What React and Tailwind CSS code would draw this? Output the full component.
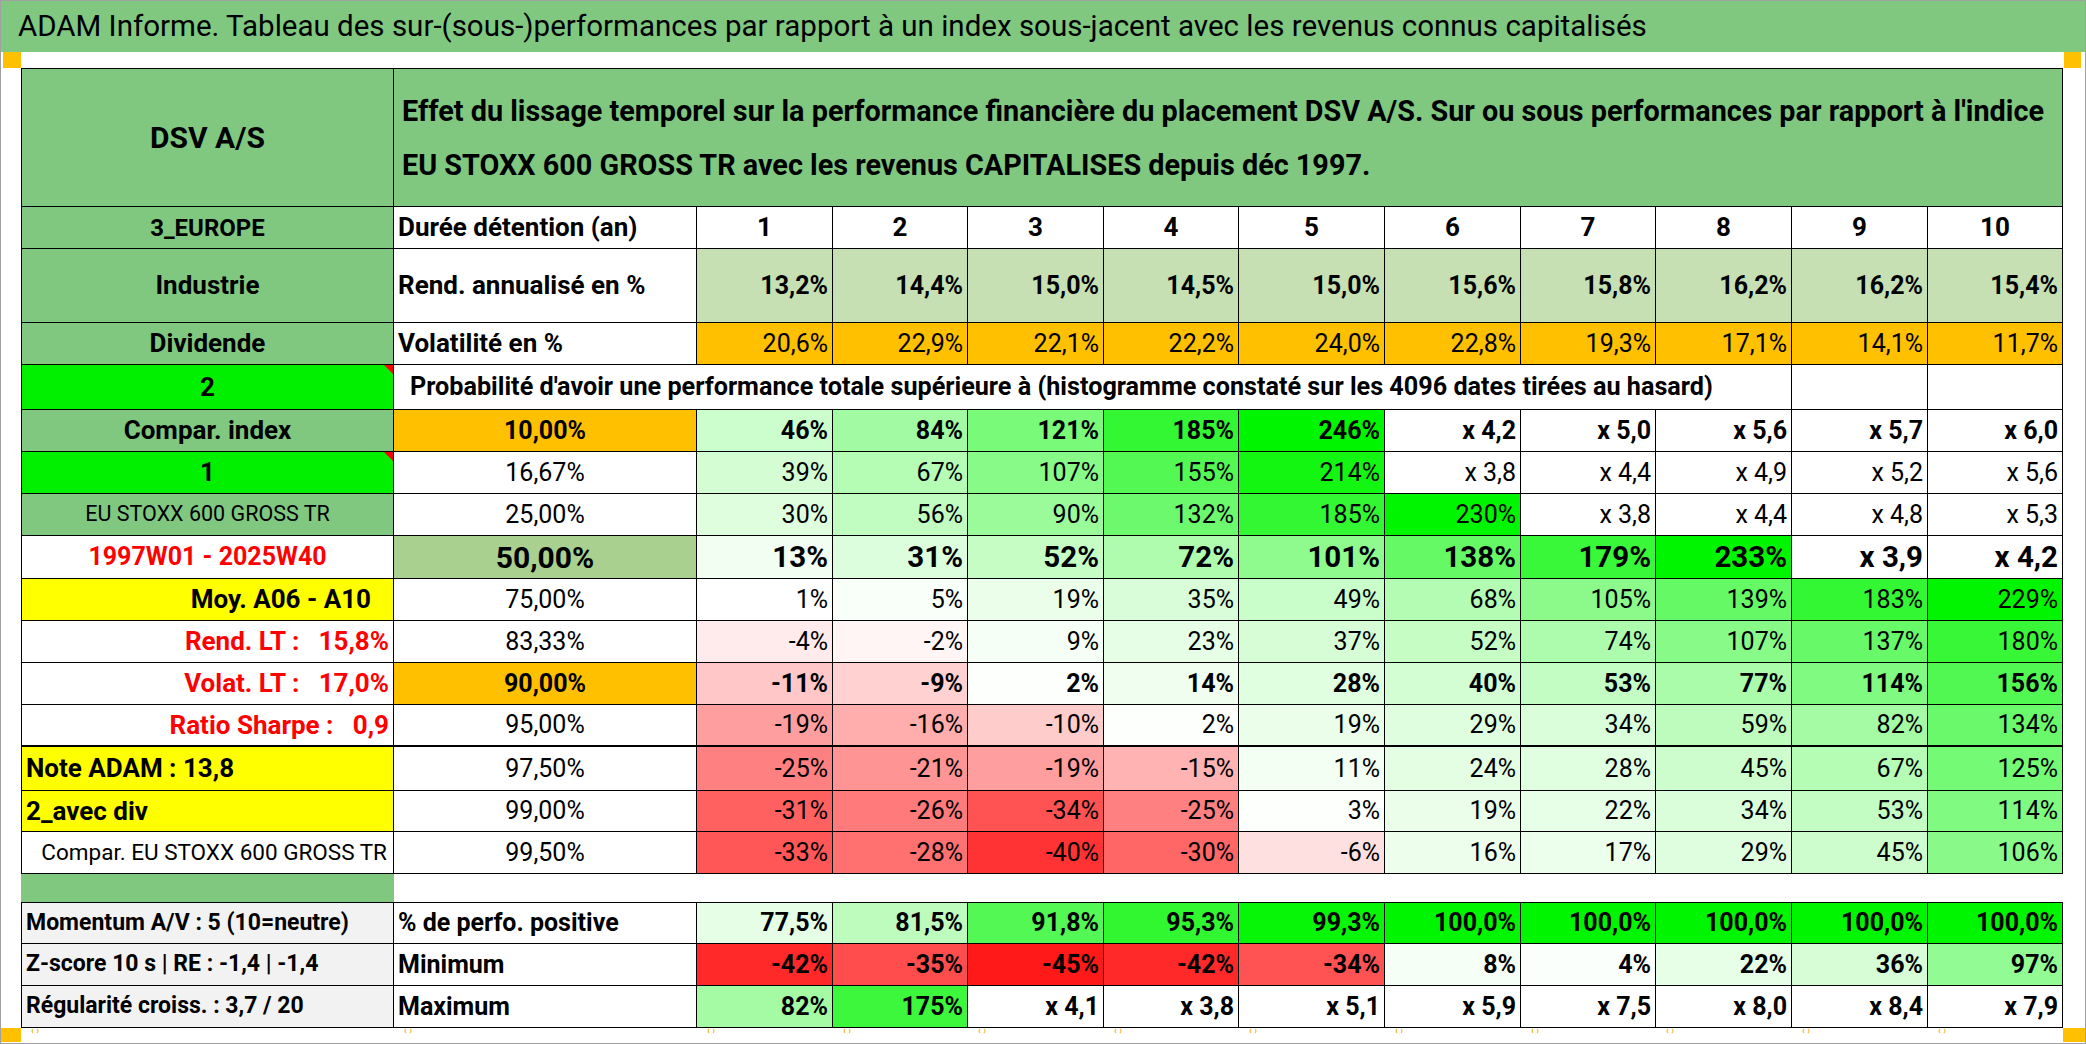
import React from "react";

const GRID =
  "grid grid-cols-[373px_303px_136px_135px_136px_135px_146px_136px_135px_136px_136px_135px]";
const CELL =
  "border-r border-b border-black flex items-center whitespace-nowrap overflow-hidden";
const GREEN = "bg-[#80c880]";

function pct(s) {
  if (!s.endsWith("%")) return null;
  return parseFloat(s.replace(",", ".").replace("%", ""));
}
const clamp = (t) => Math.max(0, Math.min(1, t));
function heat(s, mode) {
  const v = pct(s);
  if (v === null) return "#ffffff";
  let t;
  let red = false;
  if (mode === "pos") t = clamp((v - 75) / 25);
  else if (v >= 0) t = clamp(v / 230);
  else {
    t = clamp(-v / 50);
    red = true;
  }
  const c = Math.round(255 * (1 - t));
  if (red) return `rgb(255,${c},${c})`;
  const g = Math.round(255 - 10 * t);
  return `rgb(${c},${g},${c})`;
}

function Tri() {
  return (
    <div className="absolute top-0 right-0 w-0 h-0 border-t-[9px] border-t-[#ff0000] border-l-[9px] border-l-transparent" />
  );
}

const probRows = [
  {
    label: "Compar. index",
    lcls: `${GREEN} justify-center font-bold text-[26px]`,
    p: "10,00%",
    pcls: "bg-[#ffc000] font-bold text-[25px]",
    vals: ["46%", "84%", "121%", "185%", "246%", "x 4,2", "x 5,0", "x 5,6", "x 5,7", "x 6,0"],
    vcls: "font-bold text-[25px]",
    h: "h-[42px]",
  },
  {
    label: "1",
    lcls: "bg-[#00f000] justify-center font-bold text-[26px] relative",
    tri: true,
    p: "16,67%",
    pcls: "bg-white text-[25px]",
    vals: ["39%", "67%", "107%", "155%", "214%", "x 3,8", "x 4,4", "x 4,9", "x 5,2", "x 5,6"],
    vcls: "text-[25px]",
    h: "h-[42px]",
  },
  {
    label: "EU STOXX 600 GROSS TR",
    lcls: `${GREEN} justify-center text-[21.5px]`,
    p: "25,00%",
    pcls: "bg-white text-[25px]",
    vals: ["30%", "56%", "90%", "132%", "185%", "230%", "x 3,8", "x 4,4", "x 4,8", "x 5,3"],
    vcls: "text-[25px]",
    h: "h-[42px]",
  },
  {
    label: "1997W01 - 2025W40",
    lcls: "bg-white justify-center font-bold text-[25px] text-[#ff0000]",
    p: "50,00%",
    pcls: "bg-[#a9d08e] font-bold text-[30px]",
    vals: ["13%", "31%", "52%", "72%", "101%", "138%", "179%", "233%", "x 3,9", "x 4,2"],
    vcls: "font-bold text-[29.5px]",
    h: "h-[43px]",
  },
  {
    label: "Moy. A06 - A10",
    lcls: "bg-[#ffff00] justify-end pr-[22px] font-bold text-[26px]",
    p: "75,00%",
    pcls: "bg-white text-[25px]",
    vals: ["1%", "5%", "19%", "35%", "49%", "68%", "105%", "139%", "183%", "229%"],
    vcls: "text-[25px]",
    h: "h-[42px]",
  },
  {
    label: "Rend. LT :   15,8%",
    lcls: "bg-white justify-end pr-[4px] font-bold text-[26px] text-[#ff0000] whitespace-pre",
    p: "83,33%",
    pcls: "bg-white text-[25px]",
    vals: ["-4%", "-2%", "9%", "23%", "37%", "52%", "74%", "107%", "137%", "180%"],
    vcls: "text-[25px]",
    h: "h-[42px]",
  },
  {
    label: "Volat. LT :   17,0%",
    lcls: "bg-white justify-end pr-[4px] font-bold text-[26px] text-[#ff0000] whitespace-pre",
    p: "90,00%",
    pcls: "bg-[#ffc000] font-bold text-[25px]",
    vals: ["-11%", "-9%", "2%", "14%", "28%", "40%", "53%", "77%", "114%", "156%"],
    vcls: "font-bold text-[25px]",
    h: "h-[42px]",
  },
  {
    label: "Ratio Sharpe :   0,9",
    lcls: "bg-white justify-end pr-[4px] font-bold text-[26px] text-[#ff0000] whitespace-pre",
    p: "95,00%",
    pcls: "bg-white text-[25px]",
    vals: ["-19%", "-16%", "-10%", "2%", "19%", "29%", "34%", "59%", "82%", "134%"],
    vcls: "text-[25px]",
    h: "h-[42px]",
    thick: true,
  },
  {
    label: "Note ADAM : 13,8",
    lcls: "bg-[#ffff00] justify-start pl-[4px] font-bold text-[26px]",
    p: "97,50%",
    pcls: "bg-white text-[25px]",
    vals: ["-25%", "-21%", "-19%", "-15%", "11%", "24%", "28%", "45%", "67%", "125%"],
    vcls: "text-[25px]",
    h: "h-[44px]",
  },
  {
    label: "2_avec div",
    lcls: "bg-[#ffff00] justify-start pl-[4px] font-bold text-[26px]",
    p: "99,00%",
    pcls: "bg-white text-[25px]",
    vals: ["-31%", "-26%", "-34%", "-25%", "3%", "19%", "22%", "34%", "53%", "114%"],
    vcls: "text-[25px]",
    h: "h-[41px]",
  },
  {
    label: "Compar. EU STOXX 600 GROSS TR",
    lcls: "bg-white justify-end pr-[6px] text-[22.5px]",
    p: "99,50%",
    pcls: "bg-white text-[25px]",
    vals: ["-33%", "-28%", "-40%", "-30%", "-6%", "16%", "17%", "29%", "45%", "106%"],
    vcls: "text-[25px]",
    h: "h-[42px]",
  },
];

const bottomRows = [
  {
    label: "Momentum A/V : 5 (10=neutre)",
    desc: "% de perfo. positive",
    vals: ["77,5%", "81,5%", "91,8%", "95,3%", "99,3%", "100,0%", "100,0%", "100,0%", "100,0%", "100,0%"],
    mode: "pos",
  },
  {
    label: "Z-score 10 s | RE : -1,4 | -1,4",
    desc: "Minimum",
    vals: ["-42%", "-35%", "-45%", "-42%", "-34%", "8%", "4%", "22%", "36%", "97%"],
    mode: "std",
  },
  {
    label: "Régularité croiss. : 3,7 / 20",
    desc: "Maximum",
    vals: ["82%", "175%", "x 4,1", "x 3,8", "x 5,1", "x 5,9", "x 7,5", "x 8,0", "x 8,4", "x 7,9"],
    mode: "std",
  },
];

const rend = ["13,2%", "14,4%", "15,0%", "14,5%", "15,0%", "15,6%", "15,8%", "16,2%", "16,2%", "15,4%"];
const vol = ["20,6%", "22,9%", "22,1%", "22,2%", "24,0%", "22,8%", "19,3%", "17,1%", "14,1%", "11,7%"];

function Mark() {
  return (
    <svg width="10" height="6" viewBox="0 0 10 6" className="ml-[9px]">
      <path d="M3 1 Q1 3 3 5 M7 1 Q9 3 7 5" stroke="#f2c24a" strokeWidth="1.2" fill="none" />
    </svg>
  );
}

export default function App() {
  return (
    <div className="w-[2086px] h-[1044px] bg-white border border-[#a0a0a0] flex flex-col overflow-hidden font-['Roboto',sans-serif] text-black">
      {/* title */}
      <div className="h-[51px] bg-[#80c880] flex items-center pl-[17px] text-[29.5px] whitespace-nowrap">
        ADAM Informe. Tableau des sur-(sous-)performances par rapport à un index sous-jacent avec les revenus connus capitalisés
      </div>
      {/* strip */}
      <div className="h-[16px] flex justify-between">
        <div className="ml-[2px] w-[18px] bg-[#ffc000]" />
        <div className="mr-[4px] w-[17px] bg-[#ffc000]" />
      </div>

      {/* table */}
      <div className="ml-[20px] w-[2042px] flex flex-col">
        {/* header */}
        <div className={`${GRID} h-[139px] border-t border-black`}>
          <div className={`${CELL} border-l ${GREEN} justify-center font-bold text-[30px]`}>DSV A/S</div>
          <div className={`col-span-11 border-r border-b border-black ${GREEN} flex flex-col justify-center pl-[8px] font-bold text-[28.8px] leading-[54px] whitespace-nowrap`}>
            <div>
              Effet du lissage temporel sur la performance financière du placement DSV A/S. Sur ou sous performances par rapport à l'indice
            </div>
            <div>EU STOXX 600 GROSS TR avec les revenus CAPITALISES depuis déc 1997.</div>
          </div>
        </div>

        {/* Durée */}
        <div className={`${GRID} h-[42px]`}>
          <div className={`${CELL} border-l ${GREEN} justify-center font-bold text-[24px]`}>3_EUROPE</div>
          <div className={`${CELL} bg-white pl-[4px] font-bold text-[26px]`}>Durée détention (an)</div>
          {["1", "2", "3", "4", "5", "6", "7", "8", "9", "10"].map((n) => (
            <div key={n} className={`${CELL} bg-white justify-center font-bold text-[26px]`}>
              {n}
            </div>
          ))}
        </div>

        {/* Rendement */}
        <div className={`${GRID} h-[74px]`}>
          <div className={`${CELL} border-l ${GREEN} justify-center font-bold text-[26px]`}>Industrie</div>
          <div className={`${CELL} bg-white pl-[4px] font-bold text-[26px]`}>Rend. annualisé en %</div>
          {rend.map((v, i) => (
            <div key={i} className={`${CELL} bg-[#c6e0b4] justify-end pr-[4px] font-bold text-[25px]`}>
              {v}
            </div>
          ))}
        </div>

        {/* Volatilite */}
        <div className={`${GRID} h-[42px]`}>
          <div className={`${CELL} border-l ${GREEN} justify-center font-bold text-[26px]`}>Dividende</div>
          <div className={`${CELL} bg-white pl-[4px] font-bold text-[26px]`}>Volatilité en %</div>
          {vol.map((v, i) => (
            <div key={i} className={`${CELL} bg-[#ffc000] justify-end pr-[4px] text-[25px]`}>
              {v}
            </div>
          ))}
        </div>

        {/* Probabilite */}
        <div className={`${GRID} h-[45px]`}>
          <div className={`${CELL} border-l bg-[#00f000] justify-center font-bold text-[26px] relative`}>
            2
            <Tri />
          </div>
          <div className={`${CELL} col-span-9 bg-white pl-[16px] font-bold text-[25.2px]`}>
            Probabilité d'avoir une performance totale supérieure à (histogramme constaté sur les 4096 dates tirées au hasard)
          </div>
          <div className={`${CELL} bg-white`} />
          <div className={`${CELL} bg-white`} />
        </div>

        {probRows.map((r, ri) => (
          <div key={ri} className={`${GRID} ${r.h}`}>
            <div className={`${CELL} border-l ${r.thick ? "border-b-2" : ""} ${r.lcls}`}>
              {r.label}
              {r.tri && <Tri />}
            </div>
            <div className={`${CELL} ${r.thick ? "border-b-2" : ""} justify-center ${r.pcls}`}>{r.p}</div>
            {r.vals.map((v, i) => (
              <div
                key={i}
                className={`${CELL} ${r.thick ? "border-b-2" : ""} justify-end pr-[4px] ${r.vcls}`}
                style={{ background: heat(v, "std") }}
              >
                {v}
              </div>
            ))}
          </div>
        ))}

        {/* spacer */}
        <div className={`${GRID} h-[28px]`}>
          <div className={GREEN} />
          <div className="col-span-11 bg-white" />
        </div>

        {bottomRows.map((r, ri) => (
          <div key={ri} className={`${GRID} h-[42px] ${ri === 0 ? "border-t border-black" : ""}`}>
            <div className={`${CELL} border-l bg-[#f2f2f2] pl-[4px] font-bold text-[23px]`}>{r.label}</div>
            <div className={`${CELL} bg-white pl-[4px] font-bold text-[25px]`}>{r.desc}</div>
            {r.vals.map((v, i) => (
              <div
                key={i}
                className={`${CELL} justify-end pr-[4px] font-bold text-[25px]`}
                style={{ background: heat(v, r.mode) }}
              >
                {v}
              </div>
            ))}
          </div>
        ))}
      </div>

      {/* bottom strip */}
      <div className="h-[15px] flex">
        <div className="w-[20px] h-[14px] bg-[#ffc000]" />
        <div className={`${GRID} w-[2042px] items-start`}>
          {Array.from({ length: 12 }).map((_, i) => (
            <div key={i} className="flex">
              <Mark />
            </div>
          ))}
        </div>
        <div className="w-[22px] h-[14px] bg-[#ffc000]" />
      </div>
    </div>
  );
}
